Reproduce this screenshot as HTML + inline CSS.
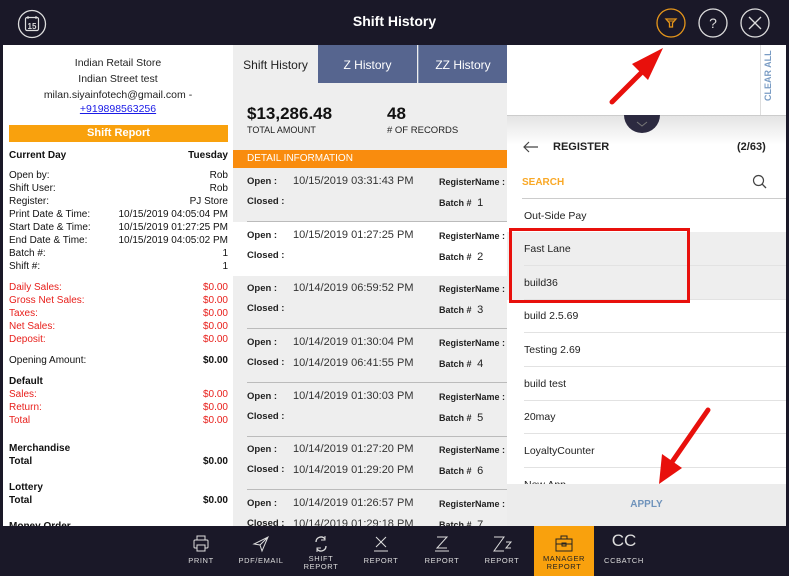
<!DOCTYPE html>
<html><head><meta charset="utf-8"><style>
*{margin:0;padding:0;box-sizing:border-box}
body{width:789px;height:576px;position:relative;overflow:hidden;background:#1a1828;font-family:"Liberation Sans",sans-serif}
.a{position:absolute}
.top{left:0;top:0;width:789px;height:45px;background:#1a1828}
.left{left:3px;top:45px;width:230px;height:481px;background:#fff;overflow:hidden;font-size:10px;color:#111}
.row{position:absolute;left:6px;width:219px;height:13px;line-height:13px}
.row span{position:absolute;right:0}
.red{color:#e8201c}
.b{font-weight:bold}
.mid{left:233px;top:45px;width:274px;height:481px;background:#eeeeee;overflow:hidden}
.tab{top:0;height:38px;line-height:40px;font-size:12px;text-align:center;color:#fff;background:#56658f}
.rec{position:absolute;left:0;width:274px;height:54px;font-size:10.5px;color:#222;white-space:nowrap}
.rec .l{position:absolute;left:14px;font-weight:bold;font-size:9.5px}
.rec .v{position:absolute;left:60px;font-size:11px;color:#333}
.rec .r{position:absolute;left:206px;font-weight:bold;font-size:9px;white-space:nowrap}
.rec .sep{position:absolute;left:14px;right:0;bottom:0;height:1px;background:#bbb}
.right{left:507px;top:45px;width:279px;height:481px;background:#fff;overflow:hidden}
.item{position:absolute;left:0;width:279px;height:34px;line-height:34px;padding-left:17px;font-size:10.5px;color:#222}
.item:after{content:"";position:absolute;left:17px;right:0;bottom:0;height:1px;background:#e2e2e2}
.bot{left:0;top:526px;width:789px;height:50px;background:#1a1828}
.bi{position:absolute;top:0;width:60px;height:50px;color:#ddd;font-size:7.5px;letter-spacing:.6px;text-align:center}
.bi .t{position:absolute;left:0;right:0;top:31px;line-height:8px}
.bi svg{position:absolute;left:20px;top:8px}
</style></head><body>
<div class="a top">
 <svg class="a" style="left:17px;top:9px" width="30" height="30" viewBox="0 0 30 30"><circle cx="15" cy="15" r="13.5" fill="none" stroke="#ddd" stroke-width="1.3"/><rect x="8.5" y="8.5" width="13" height="13" rx="1.5" fill="none" stroke="#ddd" stroke-width="1.2"/><line x1="11" y1="7" x2="11" y2="10" stroke="#ddd"/><line x1="19" y1="7" x2="19" y2="10" stroke="#ddd"/><text x="15" y="20" font-size="8" fill="#ddd" text-anchor="middle" font-family="Liberation Sans" font-weight="bold">15</text></svg>
 <div class="a" style="left:0;width:789px;top:13px;text-align:center;color:#fff;font-size:14px;font-weight:bold">Shift History</div>
 <svg class="a" style="left:656px;top:8px" width="30" height="30"><circle cx="15" cy="15" r="14" fill="none" stroke="#e6961a" stroke-width="1.3"/><path d="M10 11h10l-3.5 4v4h-3v-4z" fill="none" stroke="#e6961a" stroke-width="1.3"/><line x1="11.5" y1="13" x2="18.5" y2="13" stroke="#e6961a"/></svg>
 <svg class="a" style="left:698px;top:8px" width="30" height="30"><circle cx="15" cy="15" r="14" fill="none" stroke="#ddd" stroke-width="1.3"/><text x="15" y="20" font-size="14" fill="#ddd" text-anchor="middle" font-family="Liberation Sans">?</text></svg>
 <svg class="a" style="left:740px;top:8px" width="30" height="30"><circle cx="15" cy="15" r="14" fill="none" stroke="#ddd" stroke-width="1.3"/><path d="M9 9l12 12M21 9L9 21" stroke="#ddd" stroke-width="1.3"/></svg>
</div>

<div class="a left">
 <div class="a" style="left:0;width:230px;top:10px;text-align:center;font-size:10.5px;line-height:16px;color:#222">Indian Retail Store<br>Indian Street test<br>milan.siyainfotech@gmail.com -</div>
 <div class="a" style="left:0;width:230px;top:57px;text-align:center;font-size:10.5px;line-height:14px;color:#1a1ae6;text-decoration:underline">+919898563256</div>
 <div class="a" style="left:6px;top:80px;width:219px;height:17px;background:#f9a10d;color:#fff;font-weight:bold;text-align:center;line-height:17px;font-size:11px">Shift Report</div>
 <div class="row b" style="top:104px">Current Day<span>Tuesday</span></div>
 <div class="row" style="top:124px">Open by:<span>Rob</span></div>
 <div class="row" style="top:137px">Shift User:<span>Rob</span></div>
 <div class="row" style="top:150px">Register:<span>PJ Store</span></div>
 <div class="row" style="top:163px">Print Date &amp; Time:<span>10/15/2019 04:05:04 PM</span></div>
 <div class="row" style="top:176px">Start Date &amp; Time:<span>10/15/2019 01:27:25 PM</span></div>
 <div class="row" style="top:189px">End Date &amp; Time:<span>10/15/2019 04:05:02 PM</span></div>
 <div class="row" style="top:202px">Batch #:<span>1</span></div>
 <div class="row" style="top:215px">Shift #:<span>1</span></div>
 <div class="row red" style="top:236px">Daily Sales:<span>$0.00</span></div>
 <div class="row red" style="top:249px">Gross Net Sales:<span>$0.00</span></div>
 <div class="row red" style="top:262px">Taxes:<span>$0.00</span></div>
 <div class="row red" style="top:275px">Net Sales:<span>$0.00</span></div>
 <div class="row red" style="top:288px">Deposit:<span>$0.00</span></div>
 <div class="row" style="top:309px">Opening Amount:<span class="b">$0.00</span></div>
 <div class="row b" style="top:330px">Default</div>
 <div class="row red" style="top:343px">Sales:<span>$0.00</span></div>
 <div class="row red" style="top:356px">Return:<span>$0.00</span></div>
 <div class="row red" style="top:369px">Total<span>$0.00</span></div>
 <div class="row b" style="top:397px">Merchandise</div>
 <div class="row b" style="top:410px">Total<span>$0.00</span></div>
 <div class="row b" style="top:436px">Lottery</div>
 <div class="row b" style="top:449px">Total<span>$0.00</span></div>
 <div class="row b" style="top:475px">Money Order</div>
</div>

<div class="a mid">
 <div class="a tab" style="left:0;width:85px;background:#eee;color:#222">Shift History</div>
 <div class="a tab" style="left:85px;width:99px">Z History</div>
 <div class="a tab" style="left:185px;width:89px;border-left:1px solid #8090b0">ZZ History</div>
 <div class="a" style="left:14px;top:59px;font-size:17px;font-weight:bold;color:#111">$13,286.48</div>
 <div class="a" style="left:14px;top:80px;font-size:9px;color:#222">TOTAL AMOUNT</div>
 <div class="a" style="left:154px;top:59px;font-size:17px;font-weight:bold;color:#111">48</div>
 <div class="a" style="left:154px;top:80px;font-size:9.5px;color:#222"># OF RECORDS</div>
 <div class="a" style="left:0;top:105px;width:274px;height:18px;background:#f98c0e;color:#fff;font-size:10px;line-height:18px;padding-left:14px">DETAIL INFORMATION</div>
 <div class="rec" style="top:123px"><div class="l" style="top:8px">Open :</div><div class="v" style="top:7px">10/15/2019 03:31:43 PM</div><div class="r" style="top:9px">RegisterName :</div><div class="l" style="top:28px">Closed :</div><div class="r" style="top:29px">Batch # <span style="font-weight:normal;font-size:11px">&nbsp;1</span></div><div class="sep"></div></div>
 <div class="rec" style="top:177px;background:#fff"><div class="l" style="top:8px">Open :</div><div class="v" style="top:7px">10/15/2019 01:27:25 PM</div><div class="r" style="top:9px">RegisterName :</div><div class="l" style="top:28px">Closed :</div><div class="r" style="top:29px">Batch # <span style="font-weight:normal;font-size:11px">&nbsp;2</span></div></div>
 <div class="rec" style="top:230px"><div class="l" style="top:8px">Open :</div><div class="v" style="top:7px">10/14/2019 06:59:52 PM</div><div class="r" style="top:9px">RegisterName :</div><div class="l" style="top:28px">Closed :</div><div class="r" style="top:29px">Batch # <span style="font-weight:normal;font-size:11px">&nbsp;3</span></div><div class="sep"></div></div>
 <div class="rec" style="top:284px"><div class="l" style="top:8px">Open :</div><div class="v" style="top:7px">10/14/2019 01:30:04 PM</div><div class="r" style="top:9px">RegisterName :</div><div class="l" style="top:28px">Closed :</div><div class="v" style="top:28px">10/14/2019 06:41:55 PM</div><div class="r" style="top:29px">Batch # <span style="font-weight:normal;font-size:11px">&nbsp;4</span></div><div class="sep"></div></div>
 <div class="rec" style="top:338px"><div class="l" style="top:8px">Open :</div><div class="v" style="top:7px">10/14/2019 01:30:03 PM</div><div class="r" style="top:9px">RegisterName :</div><div class="l" style="top:28px">Closed :</div><div class="r" style="top:29px">Batch # <span style="font-weight:normal;font-size:11px">&nbsp;5</span></div><div class="sep"></div></div>
 <div class="rec" style="top:391px"><div class="l" style="top:8px">Open :</div><div class="v" style="top:7px">10/14/2019 01:27:20 PM</div><div class="r" style="top:9px">RegisterName :</div><div class="l" style="top:28px">Closed :</div><div class="v" style="top:28px">10/14/2019 01:29:20 PM</div><div class="r" style="top:29px">Batch # <span style="font-weight:normal;font-size:11px">&nbsp;6</span></div><div class="sep"></div></div>
 <div class="rec" style="top:445px"><div class="l" style="top:8px">Open :</div><div class="v" style="top:7px">10/14/2019 01:26:57 PM</div><div class="r" style="top:9px">RegisterName :</div><div class="l" style="top:28px">Closed :</div><div class="v" style="top:28px">10/14/2019 01:29:18 PM</div><div class="r" style="top:29px">Batch # <span style="font-weight:normal;font-size:11px">&nbsp;7</span></div></div>
</div>

<div class="a right">
 <div class="a" style="left:253px;top:0;width:26px;height:70px;border-left:1px solid #ddd"></div>
 <div class="a" style="left:256px;top:56px;transform:rotate(-90deg);transform-origin:0 0;font-size:9px;font-weight:bold;color:#7a9cc4;white-space:nowrap">CLEAR ALL</div>
 <div class="a" style="left:0;top:70px;width:279px;height:30px;background:linear-gradient(#e4e4e4,#fff);border-top:1px solid #ccc"></div>
 <div class="a" style="left:117px;top:52px;width:36px;height:36px;border-radius:50%;background:#2c2a40;clip-path:inset(18px 0 0 0)"></div>
 <svg class="a" style="left:128px;top:75px" width="14" height="8"><path d="M2 2l5 4 5-4" fill="none" stroke="#777" stroke-width="1"/></svg>
 <svg class="a" style="left:15px;top:96px" width="18" height="12"><path d="M16 6H2M7 1L2 6l5 5" fill="none" stroke="#444" stroke-width="1.2"/></svg>
 <div class="a" style="left:46px;top:96px;font-size:11px;font-weight:bold;color:#222">REGISTER</div>
 <div class="a" style="left:230px;top:96px;font-size:11px;font-weight:bold;color:#222">(2/63)</div>
 <div class="a" style="left:15px;top:132px;font-size:10px;font-weight:bold;color:#f9a826">SEARCH</div>
 <svg class="a" style="left:245px;top:129px" width="16" height="16"><circle cx="6.5" cy="6.5" r="5" fill="none" stroke="#444" stroke-width="1.2"/><path d="M10 10l4 4" stroke="#444" stroke-width="1.3"/></svg>
 <div class="a" style="left:15px;top:153px;width:264px;height:1px;background:#ccc"></div>
 <div class="item" style="top:154px">Out-Side Pay</div>
 <div class="item" style="top:187px;background:#eee">Fast Lane</div>
 <div class="item" style="top:221px;background:#eee">build36</div>
 <div class="item" style="top:254px">build 2.5.69</div>
 <div class="item" style="top:288px">Testing 2.69</div>
 <div class="item" style="top:322px">build test</div>
 <div class="item" style="top:355px">20may</div>
 <div class="item" style="top:389px">LoyaltyCounter</div>
 <div class="item" style="top:423px">New App</div>
 <div class="a" style="left:0;top:439px;width:279px;height:42px;background:#ececec;text-align:center;line-height:42px;font-size:10px;font-weight:bold;color:#6f93bb">APPLY</div>
</div>

<div class="a" style="left:509px;top:228px;width:181px;height:75px;border:3px solid #e8100c"></div>

<svg class="a" style="left:0;top:0" width="789" height="576">
 <path d="M612 102L648 66" stroke="#e8100c" stroke-width="5" stroke-linecap="round"/>
 <path d="M663 48L632 64L648 80Z" fill="#e8100c"/>
 <path d="M708 410L672 462" stroke="#e8100c" stroke-width="5" stroke-linecap="round"/>
 <path d="M659 484L662 454L682 468Z" fill="#e8100c"/>
</svg>

<div class="a bot">
 <div class="bi" style="left:171px"><svg width="20" height="20"><rect x="3" y="6" width="14" height="8" rx="1" fill="none" stroke="#ddd"/><rect x="6" y="2" width="8" height="4" fill="none" stroke="#ddd"/><rect x="6" y="11" width="8" height="6" fill="#1a1828" stroke="#ddd"/></svg><div class="t">PRINT</div></div>
 <div class="bi" style="left:231px"><svg width="20" height="20"><path d="M3 10L17 3L11 17L9 11Z M9 11L17 3" fill="none" stroke="#ddd"/></svg><div class="t">PDF/EMAIL</div></div>
 <div class="bi" style="left:291px"><svg width="20" height="20"><path d="M5 8a5 5 0 0 1 9-3M15 12a5 5 0 0 1-9 3" fill="none" stroke="#ddd" stroke-width="1.3"/><path d="M14 2v4h-4M6 18v-4h4" fill="none" stroke="#ddd"/></svg><div class="t" style="top:29px">SHIFT<br>REPORT</div></div>
 <div class="bi" style="left:351px"><svg width="20" height="20"><path d="M5 3l10 10M15 3L5 13M3 17h14" stroke="#ddd"/></svg><div class="t">REPORT</div></div>
 <div class="bi" style="left:412px"><svg width="20" height="20"><path d="M5 3h10L5 14h10M3 17h14" fill="none" stroke="#ddd"/></svg><div class="t">REPORT</div></div>
 <div class="bi" style="left:472px"><svg width="22" height="20"><path d="M2 3h10L2 17h10M14 8h5l-5 6h5" fill="none" stroke="#ddd"/></svg><div class="t">REPORT</div></div>
 <div class="bi" style="left:534px;background:#f9a10d;color:#222"><svg width="20" height="20"><rect x="2" y="5" width="16" height="12" fill="none" stroke="#222"/><path d="M7 5V2h6v3M2 10h16" fill="none" stroke="#222"/><rect x="8" y="9" width="4" height="3" fill="none" stroke="#222"/></svg><div class="t" style="top:29px">MANAGER<br>REPORT</div></div>
 <div class="bi" style="left:594px"><div style="position:absolute;left:0;right:0;top:5px;font-size:17px;letter-spacing:0">CC</div><div class="t">CCBATCH</div></div>
</div>
</body></html>
